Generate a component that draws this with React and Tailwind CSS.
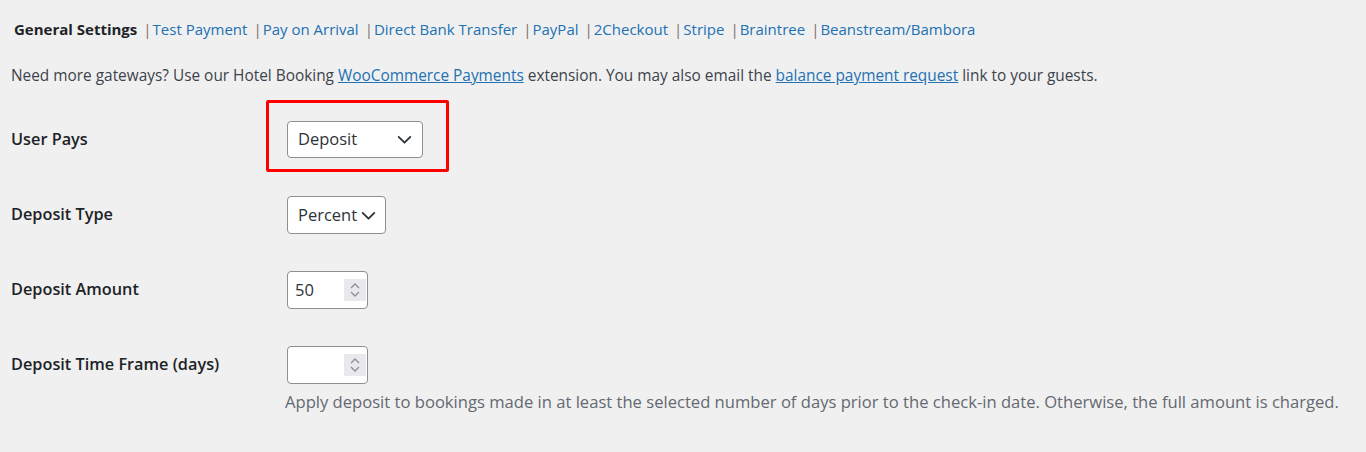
import React from 'react';

const tabs = ['Test Payment', 'Pay on Arrival', 'Direct Bank Transfer', 'PayPal', '2Checkout', 'Stripe', 'Braintree', 'Beanstream/Bambora'];

const Chevron = ({ className = '' }) => (
    <svg viewBox="0 0 16 16" className={className} fill="none" stroke="currentColor" strokeWidth="1.7" strokeLinecap="round" strokeLinejoin="round">
        <path d="M2.5 5.5l5.5 5.5 5.5-5.5" />
    </svg>
);

const Spinner = () => (
    <div className="absolute right-[1px] top-1/2 -translate-y-1/2 w-[22px] h-[22px] bg-[#e9e9ed] flex flex-col items-center justify-center text-[#8f8f9d]">
        <svg viewBox="0 0 10 6" className="w-[10px] h-[6px]" fill="none" stroke="currentColor" strokeWidth="1.4"><path d="M1 5l4-4 4 4" /></svg>
        <svg viewBox="0 0 10 6" className="w-[10px] h-[6px] mt-[2px]" fill="none" stroke="currentColor" strokeWidth="1.4"><path d="M1 1l4 4 4-4" /></svg>
    </div>
);

const Label = ({ children }) => (
    <div className="w-[287px] shrink-0 pl-[11px] h-[37px] flex items-center font-semibold text-[16.3px] text-[#1d2327]">{children}</div>
);

const Row = ({ label, children }) => (
    <div className="flex items-start h-[75px]">
        <Label>{label}</Label>
        <div>{children}</div>
    </div>
);

const App = () => {
    return (
        <div className="min-h-screen bg-[#f0f0f1] text-[15.4px] text-[#3c434a] font-['Open_Sans',sans-serif]">
            <div className="pt-[18px] pl-[14px] h-[42px] text-[15px] leading-[22px] whitespace-nowrap">
                <span className="font-bold text-[#1d2327]">General Settings</span>
                {tabs.map(t => (
                    <span key={t}>
                        <span className="inline-block ml-[6px] mr-[1px] text-[#7b6f66]">|</span>
                        <a href="#" className="text-[#2271b1]">{t}</a>
                    </span>
                ))}
            </div>
            <p className="pl-[11px] mt-[23px] leading-[22px] whitespace-nowrap">
                Need more gateways? Use our Hotel Booking <a href="#" className="text-[#2271b1] underline">WooCommerce Payments</a> extension. You may also email the <a href="#" className="text-[#2271b1] underline">balance payment request</a> link to your guests.
            </p>
            <div className="mt-[34px]">
                <Row label="User Pays">
                    <div className="relative">
                        <div className="absolute -left-[21px] -top-[21px] w-[183px] h-[72px] border-[3px] border-[#ff0000] rounded-[2px]" />
                        <div className="w-[136px] h-[37px] bg-white border border-[#8c8f94] rounded-[4px] flex items-center justify-between pl-[10px] pr-[9px] text-[16.5px] text-[#2c3338]">
                            <span>Deposit</span>
                            <Chevron className="w-[17px] h-[17px] text-[#2c3338]" />
                        </div>
                    </div>
                </Row>
                <Row label="Deposit Type">
                    <div className="w-[99px] h-[38px] bg-white border border-[#8c8f94] rounded-[4px] flex items-center justify-between pl-[10px] pr-[8px] text-[16.5px] text-[#2c3338]">
                        <span>Percent</span>
                        <Chevron className="w-[17px] h-[17px] text-[#2c3338]" />
                    </div>
                </Row>
                <Row label="Deposit Amount">
                    <div className="relative w-[81px] h-[38px] bg-white border border-[#8c8f94] rounded-[4px] flex items-center pl-[7px] text-[16.5px] text-[#2c3338]">
                        <span>50</span>
                        <Spinner />
                    </div>
                </Row>
                <div className="flex items-start">
                    <Label>Deposit Time Frame (days)</Label>
                    <div>
                        <div className="relative w-[81px] h-[38px] bg-white border border-[#8c8f94] rounded-[4px]">
                            <Spinner />
                        </div>
                        <p className="mt-[6px] text-[16.6px] text-[#646970] leading-[24px] -ml-[2px] whitespace-nowrap">Apply deposit to bookings made in at least the selected number of days prior to the check-in date. Otherwise, the full amount is charged.</p>
                    </div>
                </div>
            </div>
        </div>
    );
};

export default App;
